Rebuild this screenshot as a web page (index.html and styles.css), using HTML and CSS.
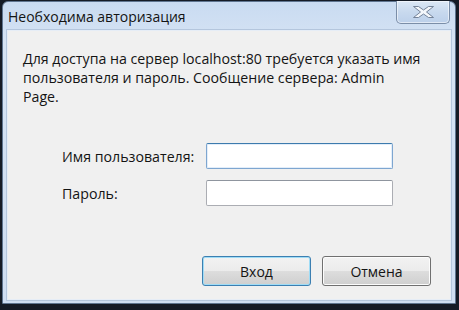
FILE: index.html
```html
<!DOCTYPE html>
<html lang="ru">
<head>
<meta charset="utf-8">
<link rel="stylesheet" href="styles.css">
</head>
<body>
<div class="screen">
  <div class="frame">
    <div class="titlebar">
      <span class="title">Необходима авторизация</span>
      <button class="close" type="button" aria-label="Закрыть">
        <svg width="23" height="14" viewBox="0 0 23 14">
          <path d="M1.5 1.5 H6.5 L11.5 5 L16.5 1.5 H21.5 L14.5 7 L21.5 12.5 H16.5 L11.5 9 L6.5 12.5 H1.5 L8.5 7 Z" fill="#f4f7fb" stroke="#75849a" stroke-width="1" stroke-linejoin="round"/>
        </svg>
      </button>
    </div>
    <div class="content">
      <p class="message">Для доступа на сервер localhost:80 требуется указать имя пользователя и пароль. Сообщение сервера: Admin<br>Page.</p>
      <div class="form">
        <label class="label" for="user">Имя пользователя:</label>
        <input class="field focused" id="user" type="text">
        <label class="label" for="pass">Пароль:</label>
        <input class="field" id="pass" type="password">
      </div>
      <div class="buttons">
        <button class="btn default" type="button">Вход</button>
        <button class="btn" type="button">Отмена</button>
      </div>
    </div>
  </div>
</div>
</body>
</html>
```
FILE: styles.css
```css
* { box-sizing: border-box; }
html, body { margin: 0; padding: 0; }
body {
  width: 459px;
  height: 310px;
  background: #141a24;
  font-family: "Open Sans", "Noto Sans", sans-serif;
  color: #141414;
  overflow: hidden;
}
.screen {
  width: 459px;
  height: 310px;
  padding: 1px 3px 6px 2px;
  background: #151b26;
}
.frame {
  height: 100%;
  display: flex;
  flex-direction: column;
  background: linear-gradient(#c9dbf1, #d5e3f4 40px, #cfdef2);
  border: 1px solid #5f7590;
  border-radius: 6px 6px 0 0;
  padding: 0 4px 3px 4px;
}
.titlebar {
  height: 28px;
  flex: none;
  display: flex;
  align-items: flex-start;
  justify-content: space-between;
}
.title {
  font-size: 14px;
  line-height: 18px;
  margin-top: 6px;
  margin-left: 1px;
  color: #141414;
}
.close {
  width: 54px;
  height: 23px;
  margin-right: 1px;
  margin-top: -1px;
  padding: 0;
  border: 1px solid #7b8ea8;
  border-top: none;
  border-radius: 0 0 5px 5px;
  background: linear-gradient(#dce8f6, #c8d9ee 50%, #bcd0ea);
  box-shadow: inset 0 0 0 1px rgba(255,255,255,0.55);
  display: flex;
  align-items: center;
  justify-content: center;
}
.close svg { display: block; }
.content {
  flex: 1;
  display: flex;
  flex-direction: column;
  background: #f0f0f0;
  border: 1px solid #e6edf6;
  box-shadow: 0 0 0 1px #b4c6dd;
  padding: 18px 19px 13px 15px;
}
.message {
  margin: 0;
  font-size: 14.2px;
  line-height: 19px;
}
.form {
  display: grid;
  grid-template-columns: 144px 187px;
  row-gap: 11px;
  align-items: center;
  margin: 37px 0 0 39px;
}
.label {
  font-size: 14.2px;
}
.field {
  height: 26px;
  width: 187px;
  margin: 0;
  border: 1px solid #abadb3;
  border-top-color: #8f959e;
  border-radius: 2px;
  background: #fff;
  font: inherit;
}
.field.focused {
  border-color: #7ea6d0;
  border-top-color: #3d7bad;
  box-shadow: inset 0 0 0 1px #e3eefa;
}
.buttons {
  margin-top: auto;
  display: flex;
  justify-content: flex-end;
  gap: 11px;
}
.btn {
  width: 109px;
  height: 30px;
  padding: 0;
  font-family: inherit;
  font-size: 14px;
  color: #141414;
  border: 1px solid #707070;
  border-radius: 3px;
  background: linear-gradient(#f2f2f2, #ebebeb 50%, #dddddd 51%, #cfcfcf);
  box-shadow: inset 0 0 0 1px #fcfcfc;
}
.btn.default {
  border-color: #3c7fb1;
  box-shadow: inset 0 0 0 1px #9fdcf6;
}
```
